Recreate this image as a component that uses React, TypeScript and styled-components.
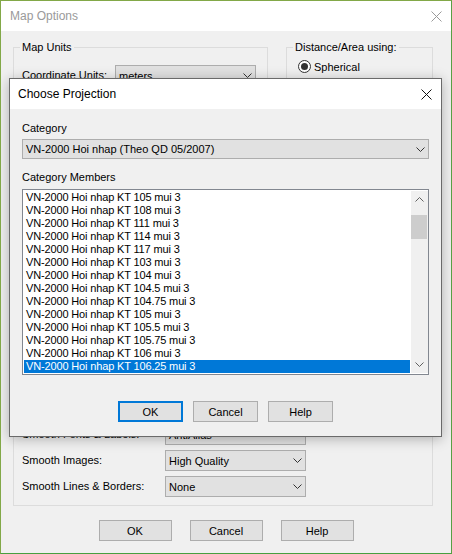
import React from 'react';
import styled, { createGlobalStyle } from 'styled-components';

const GlobalStyle = createGlobalStyle`
  html, body { margin: 0; padding: 0; background: #f0f0f0; }
  body {
    font-family: "Liberation Sans", Arial, sans-serif;
    font-size: 11px;
    color: #000;
  }
  * { box-sizing: border-box; }
`;

const Window = styled.div`
  position: relative;
  width: 452px;
  height: 554px;
  border: 1px solid;
  border-color: #82a848 #58a044 #46a040 #82a848;
  background: #f0f0f0;
  display: flex;
  flex-direction: column;
  overflow: hidden;
`;

const TitleBar = styled.div<{ $active?: boolean }>`
  flex: none;
  height: 30px;
  background: #fff;
  display: flex;
  align-items: center;
  justify-content: space-between;
  padding: 0 9px 0 ${(p) => (p.$active ? 8 : 9)}px;
  font-family: "Segoe UI", "Liberation Sans", Arial, sans-serif;
  font-size: 12px;
  color: ${(p) => (p.$active ? '#000' : '#9a9a9a')};
`;

const Body = styled.div`
  flex: 1;
  display: flex;
  flex-direction: column;
  padding: 10px 18px 12px 12px;
`;

const TopRow = styled.div`
  display: flex;
  gap: 18px;
  height: 150px;
  flex: none;
`;

const Group = styled.fieldset<{ $width?: number; $padLeft?: number }>`
  margin: 0;
  min-width: 0;
  border: 1px solid #dcdcdc;
  padding: 0 8px 8px ${(p) => p.$padLeft ?? 8}px;
  ${(p) => (p.$width ? `width: ${p.$width}px; flex: none;` : 'flex: 1;')}
`;

const GroupTitle = styled.legend<{ $shift?: number }>`
  padding: 0 2px;
  margin-left: ${(p) => p.$shift ?? -2}px;
  line-height: 13px;
  font-size: 11px;
`;

const LowerGroup = styled(Group)`
  flex: 1;
  margin-top: 12px;
  display: flex;
  flex-direction: column;
  justify-content: flex-end;
`;

const FieldGrid = styled.div<{ $labelWidth: number; $top?: number }>`
  display: grid;
  grid-template-columns: ${(p) => p.$labelWidth}px 141px;
  grid-auto-rows: 21px;
  row-gap: 5px;
  align-items: center;
  margin-top: ${(p) => p.$top ?? 0}px;
`;

const Label = styled.span`
  line-height: 13px;
  white-space: nowrap;
`;

const Combo = styled.div<{ $height?: number }>`
  height: ${(p) => p.$height ?? 21}px;
  background: #e1e1e1;
  border: 1px solid #adadad;
  display: flex;
  align-items: center;
  justify-content: space-between;
  padding: 0 3px 0 3px;
  white-space: nowrap;
  overflow: hidden;
`;

const RadioRow = styled.div`
  display: flex;
  align-items: center;
  gap: 3px;
  height: 13px;
  margin-top: 6px;
`;

const RadioCircle = styled.span<{ $checked?: boolean }>`
  width: 13px;
  height: 13px;
  border-radius: 50%;
  border: 1px solid #333;
  background: #fff;
  display: flex;
  align-items: center;
  justify-content: center;
  &::after {
    content: '';
    width: 7px;
    height: 7px;
    border-radius: 50%;
    background: ${(p) => (p.$checked ? '#333' : 'transparent')};
  }
`;

const ButtonRow = styled.div<{ $gap: number; $top?: number; $shift?: number }>`
  display: flex;
  justify-content: center;
  gap: ${(p) => p.$gap}px;
  margin-top: ${(p) => p.$top ?? 0}px;
  margin-right: ${(p) => p.$shift ?? 0}px;
  flex: none;
`;

const Button = styled.div<{ $width: number; $default?: boolean }>`
  width: ${(p) => p.$width}px;
  height: 21px;
  background: #e1e1e1;
  border: 1px solid ${(p) => (p.$default ? '#0078d7' : '#adadad')};
  box-shadow: ${(p) => (p.$default ? 'inset 0 0 0 1px #0078d7' : 'none')};
  display: flex;
  align-items: center;
  justify-content: center;
`;

/* modal dialog that sits over Map Options */
const Dialog = styled.div`
  position: absolute;
  left: 8px;
  top: 77px;
  width: 433px;
  height: 359px;
  border: 1px solid #6a6a6a;
  background: #f0f0f0;
  box-shadow: 0 2px 12px rgba(0, 0, 0, 0.28);
  display: flex;
  flex-direction: column;
`;

const DialogBody = styled.div`
  flex: 1;
  display: flex;
  flex-direction: column;
  padding: 13px 12px 14px 12px;
`;

const FieldLabel = styled.div<{ $top?: number }>`
  line-height: 13px;
  margin-top: ${(p) => p.$top ?? 0}px;
  margin-bottom: 4px;
`;

const ListBox = styled.div`
  height: 186px;
  margin-top: 1px;
  border: 1px solid #828790;
  background: #fff;
  padding: 1px 0 1px 1px;
  display: flex;
`;

const Rows = styled.div`
  flex: 1;
  overflow: hidden;
`;

const Row = styled.div<{ $selected?: boolean }>`
  height: 13px;
  line-height: 13px;
  padding-left: 2px;
  white-space: nowrap;
  letter-spacing: -0.15px;
  background: ${(p) => (p.$selected ? '#0078d7' : 'transparent')};
  color: ${(p) => (p.$selected ? '#fff' : '#000')};
`;

const ScrollBar = styled.div`
  width: 17px;
  margin-left: 1px;
  background: #f0f0f0;
  display: flex;
  flex-direction: column;
`;

const ScrollArrow = styled.div`
  height: 17px;
  flex: none;
  display: flex;
  align-items: center;
  justify-content: center;
`;

const ScrollTrack = styled.div`
  flex: 1;
`;

const ScrollThumb = styled.div`
  height: 24px;
  margin: 0 1px 0 0;
  background: #cdcdcd;
`;

const Chevron = ({ up, color = '#333' }: { up?: boolean; color?: string }) => (
  <svg width="9" height="5" viewBox="0 0 9 5">
    <polyline
      points={up ? '0.5,4.5 4.5,0.5 8.5,4.5' : '0.5,0.5 4.5,4.5 8.5,0.5'}
      fill="none"
      stroke={color}
      strokeWidth="1"
    />
  </svg>
);

const CloseIcon = ({ color }: { color: string }) => (
  <svg width="11" height="11" viewBox="0 0 11 11">
    <path d="M0.5 0.5 L10.5 10.5 M10.5 0.5 L0.5 10.5" stroke={color} strokeWidth="1" fill="none" />
  </svg>
);

const members = [
  'VN-2000 Hoi nhap KT 105 mui 3',
  'VN-2000 Hoi nhap KT 108 mui 3',
  'VN-2000 Hoi nhap KT 111 mui 3',
  'VN-2000 Hoi nhap KT 114 mui 3',
  'VN-2000 Hoi nhap KT 117 mui 3',
  'VN-2000 Hoi nhap KT 103 mui 3',
  'VN-2000 Hoi nhap KT 104 mui 3',
  'VN-2000 Hoi nhap KT 104.5 mui 3',
  'VN-2000 Hoi nhap KT 104.75 mui 3',
  'VN-2000 Hoi nhap KT 105 mui 3',
  'VN-2000 Hoi nhap KT 105.5 mui 3',
  'VN-2000 Hoi nhap KT 105.75 mui 3',
  'VN-2000 Hoi nhap KT 106 mui 3',
  'VN-2000 Hoi nhap KT 106.25 mui 3',
];

const smoothing = [
  ['Smooth Fonts & Labels:', 'AntiAlias'],
  ['Smooth Images:', 'High Quality'],
  ['Smooth Lines & Borders:', 'None'],
];

const scrollOffset = 7;

const App: React.FC = () => {
  return (
    <>
      <GlobalStyle />
      <Window>
        <TitleBar>
          <span>Map Options</span>
          <CloseIcon color="#9a9a9a" />
        </TitleBar>
        <Body>
          <TopRow>
            <Group $width={255}>
              <GroupTitle>Map Units</GroupTitle>
              <FieldGrid $labelWidth={93} $top={11}>
                <Label>Coordinate Units:</Label>
                <Combo>
                  meters
                  <Chevron />
                </Combo>
              </FieldGrid>
            </Group>
            <Group $padLeft={11}>
              <GroupTitle $shift={-5}>Distance/Area using:</GroupTitle>
              <RadioRow>
                <RadioCircle $checked />
                Spherical
              </RadioRow>
              <RadioRow>
                <RadioCircle />
              </RadioRow>
            </Group>
          </TopRow>

          <LowerGroup>
            <FieldGrid $labelWidth={143}>
              {smoothing.map(([label, value]) => (
                <React.Fragment key={label}>
                  <Label>{label}</Label>
                  <Combo>
                    {value}
                    <Chevron />
                  </Combo>
                </React.Fragment>
              ))}
            </FieldGrid>
          </LowerGroup>

          <ButtonRow $gap={18} $top={14} $shift={-6}>
            <Button $width={73}>OK</Button>
            <Button $width={73}>Cancel</Button>
            <Button $width={73}>Help</Button>
          </ButtonRow>
        </Body>

        <Dialog>
          <TitleBar $active>
            <span>Choose Projection</span>
            <CloseIcon color="#111" />
          </TitleBar>
          <DialogBody>
            <FieldLabel>Category</FieldLabel>
            <Combo $height={20}>
              VN-2000 Hoi nhap (Theo QD 05/2007)
              <Chevron />
            </Combo>
            <FieldLabel $top={12}>Category Members</FieldLabel>
            <ListBox>
              <Rows>
                {members.map((m, i) => (
                  <Row key={i} $selected={i === members.length - 1}>
                    {m}
                  </Row>
                ))}
              </Rows>
              <ScrollBar>
                <ScrollArrow>
                  <Chevron up color="#606060" />
                </ScrollArrow>
                <ScrollTrack>
                  <ScrollThumb style={{ marginTop: scrollOffset }} />
                </ScrollTrack>
                <ScrollArrow>
                  <Chevron color="#606060" />
                </ScrollArrow>
              </ScrollBar>
            </ListBox>
            <ButtonRow $gap={10} $top={26}>
              <Button $width={65} $default>
                OK
              </Button>
              <Button $width={65}>Cancel</Button>
              <Button $width={65}>Help</Button>
            </ButtonRow>
          </DialogBody>
        </Dialog>
      </Window>
    </>
  );
};

export default App;
